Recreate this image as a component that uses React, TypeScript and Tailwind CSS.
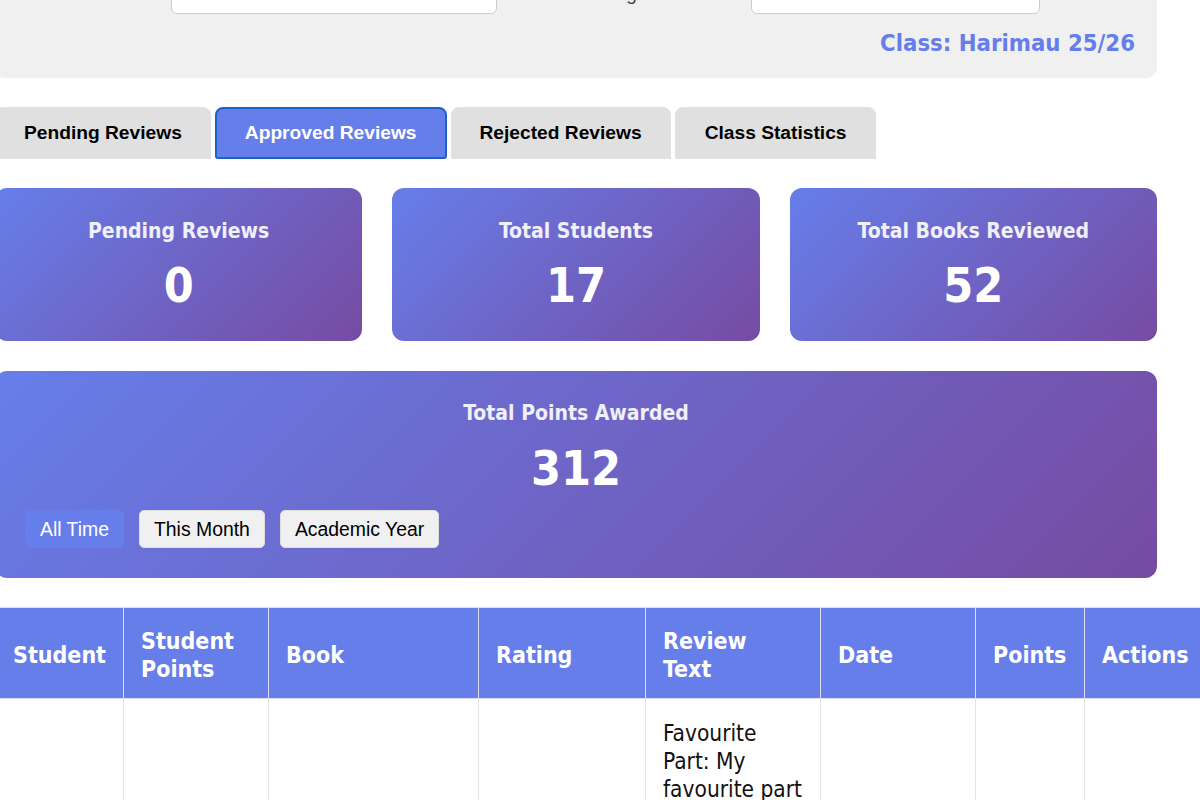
import React from "react";

const tah = "font-['DejaVu_Sans_Condensed','DejaVu_Sans',sans-serif]";
const ari = "font-['Liberation_Sans',Arial,sans-serif]";

function StatCard({ title, value }: { title: string; value: string }) {
  return (
    <div className="rounded-[12px] bg-[linear-gradient(135deg,#667eea_0%,#764ba2_100%)] px-[24px] pt-[30px] pb-[27px] text-center text-white">
      <div className={`${tah} text-[21px] font-bold leading-[26px] text-white/90`}>{title}</div>
      <div className={`${tah} mt-[12px] text-[48px] font-bold leading-[58px]`}>{value}</div>
    </div>
  );
}

const td = "font-['DejaVu_Sans_Condensed','DejaVu_Sans',sans-serif] border border-[#e3e3e3] px-[17px] pt-[20px] pb-[17px] align-middle text-[22.5px] leading-[28px] text-[#111]";

export default function App() {
  const tabs: [string, string][] = [
    ["Pending Reviews", "px-[27px]"],
    ["Approved Reviews", "px-[28px]"],
    ["Rejected Reviews", "px-[27px]"],
    ["Class Statistics", "px-[28px]"],
  ];
  const cols: [string, string][] = [
    ["Student", "w-[128px]"],
    ["Student Points", "w-[145px]"],
    ["Book", "w-[210px]"],
    ["Rating", "w-[167px]"],
    ["Review Text", "w-[175px]"],
    ["Date", "w-[155px]"],
    ["Points", "w-[109px]"],
    ["Actions", "w-[135px]"],
  ];
  return (
    <div className="min-h-[800px] w-[1200px] overflow-hidden bg-white">
      <div className="ml-[-5px] w-[1162px]">
        {/* filter panel */}
        <div className="mt-[-46px] rounded-[10px] bg-[#f0f0f0] pl-[24px] pr-[22px] pt-[20px] pb-[20px]">
          <div className="flex items-center">
            <div className={`${ari} w-[152px] text-[19px] text-[#444]`}>Student:</div>
            <div className="h-[40px] w-[326px] rounded-[6px] border border-[#ccc] bg-white" />
            <div className={`${ari} w-[254px] pl-[49px] text-left text-[19px] text-[#444]`}>Date Range:</div>
            <div className="h-[40px] w-[289px] rounded-[6px] border border-[#ccc] bg-white" />
          </div>
          <div className={`${tah} mt-[15px] text-right text-[23.7px] font-bold leading-[29px] text-[#667eea]`}>
            Class: Harimau 25/26
          </div>
        </div>

        {/* tabs */}
        <div className="mt-[29px] flex gap-[4px]">
          {tabs.map(([t, p], i) => (
            <div
              key={t}
              className={`${ari} ${p} rounded-t-[8px] border-2 py-[13px] text-[19.2px] font-bold leading-[22px] ${
                i === 1
                  ? "rounded-b-[3px] border-[#1d62c9] bg-[#667eea] text-white"
                  : "border-[#e0e0e0] bg-[#e0e0e0] text-black"
              }`}
            >
              {t}
            </div>
          ))}
        </div>

        {/* stat cards */}
        <div className="mt-[29px] grid grid-cols-3 gap-[30px]">
          <StatCard title="Pending Reviews" value="0" />
          <StatCard title="Total Students" value="17" />
          <StatCard title="Total Books Reviewed" value="52" />
        </div>

        {/* total points */}
        <div className="mt-[30px] rounded-[12px] bg-[linear-gradient(135deg,#667eea_0%,#764ba2_100%)] px-[30px] pt-[29px] pb-[30px] text-white">
          <div className={`${tah} text-center text-[21px] font-bold leading-[26px] text-white/90`}>Total Points Awarded</div>
          <div className={`${tah} mt-[13px] text-center text-[48px] font-bold leading-[58px]`}>312</div>
          <div className="mt-[13px] flex gap-[15px]">
            <div className={`${ari} rounded-[5px] border border-[#667eea] bg-[#667eea] px-[14px] py-[7px] text-[19.4px] leading-[22px] text-white`}>All Time</div>
            <div className={`${ari} rounded-[5px] border border-[#ddd] bg-[#f0f0f0] px-[14px] py-[7px] text-[19.4px] leading-[22px] text-black`}>This Month</div>
            <div className={`${ari} rounded-[5px] border border-[#ddd] bg-[#f0f0f0] px-[14px] py-[7px] text-[19.4px] leading-[22px] text-black`}>Academic Year</div>
          </div>
        </div>

        {/* table */}
        <table className="mt-[29px] w-[1224px] table-fixed border-collapse">
          <thead>
            <tr className="bg-[#667eea]">
              {cols.map(([c, w]) => (
                <th
                  key={c}
                  className={`${tah} ${w} border border-[#dde0f5] px-[17px] pt-[19px] pb-[15px] text-left align-middle text-[23px] font-bold leading-[28px] text-white`}
                >
                  {c === "Review Text" ? (
                    <>
                      Review
                      <br />
                      Text
                    </>
                  ) : (
                    c
                  )}
                </th>
              ))}
            </tr>
          </thead>
          <tbody>
            <tr>
              <td className={td}>Aisyah</td>
              <td className={td}>24</td>
              <td className={td}>The Secret Garden</td>
              <td className={td}>★★★★★</td>
              <td className={`${td} !align-top`}>
                Favourite Part: My favourite part was when Mary found the key to the hidden garden and brought it back to life with her friends Dickon and Colin. I learned that kindness and patience can change people.
              </td>
              <td className={td}>12/09/2025</td>
              <td className={td}>6</td>
              <td className={td}>Revoke</td>
            </tr>
          </tbody>
        </table>
      </div>
    </div>
  );
}
